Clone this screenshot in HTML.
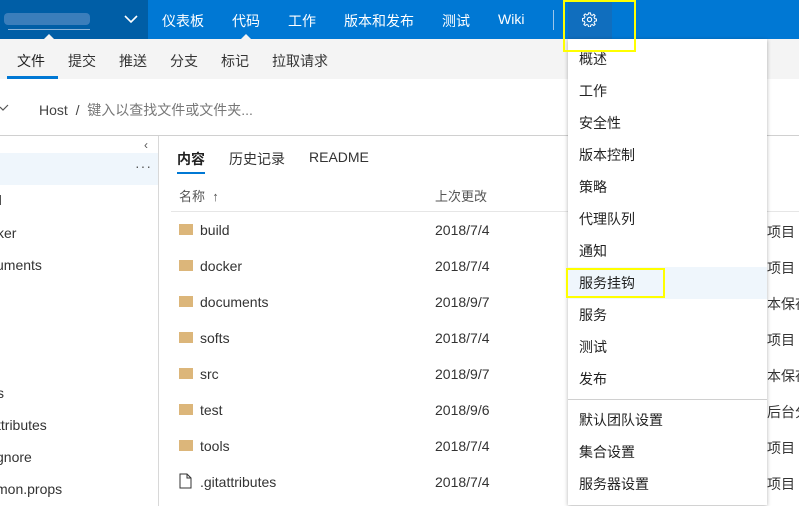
<!DOCTYPE html><html><head><meta charset="utf-8"><style>
body{margin:0;width:799px;height:506px;overflow:hidden;font-family:"Liberation Sans","Noto Sans CJK SC",sans-serif;background:#fff;position:relative;color:#333}
.a{position:absolute;white-space:nowrap}
.t{font-size:14px}
.top{left:0;top:0;width:799px;height:39px;background:#0078d4}
.nav{color:#fff;font-size:14px;top:11px}
.sub{left:0;top:39px;width:799px;height:40px;background:#f4f4f4}
.sb{top:51px;font-size:14px;color:#333}
.fold{width:14px;height:11px;background:#dcb67a}
.mi{left:579px;font-size:14px;color:#222}
</style></head><body>
<div class="a top"></div>
<div class="a" style="left:0;top:0;width:148px;height:39px;background:#005ea6"></div>
<div class="a" style="left:4px;top:13px;width:86px;height:12px;background:#4a86c0;border-radius:4px;opacity:.8"></div>
<div class="a" style="left:8px;top:29px;width:82px;height:1px;background:#8ab4da"></div>
<svg class="a" style="left:124px;top:15px" width="14" height="9"><path d="M1 1l6 6 6-6" stroke="#fff" stroke-width="1.6" fill="none"/></svg>
<div class="a" style="left:44px;top:34px;width:0;height:0;border:5px solid transparent;border-bottom-color:#f4f4f4;border-top:0"></div>
<div class="a" style="left:241px;top:34px;width:0;height:0;border:5px solid transparent;border-bottom-color:#f4f4f4;border-top:0"></div>
<div class="a nav" style="left:162px">仪表板</div>
<div class="a nav" style="left:232px">代码</div>
<div class="a nav" style="left:288px">工作</div>
<div class="a nav" style="left:344px">版本和发布</div>
<div class="a nav" style="left:442px">测试</div>
<div class="a nav" style="left:498px">Wiki</div>
<div class="a" style="left:553px;top:10px;width:1px;height:20px;background:#9cc6ea"></div>
<div class="a" style="left:568px;top:0;width:44px;height:39px;background:#106ebe"></div>
<svg class="a" style="left:582px;top:12px" width="15" height="15" viewBox="0 0 16 16"><circle cx="8" cy="8" r="2.3" fill="none" stroke="#fff" stroke-width="1.2"/><path d="M7 1h2l.4 2 1.5.7 1.7-1.2 1.4 1.4-1.2 1.7.7 1.5 2 .4v2l-2 .4-.7 1.5 1.2 1.7-1.4 1.4-1.7-1.2-1.5.7-.4 2H7l-.4-2-1.5-.7-1.7 1.2-1.4-1.4 1.2-1.7-.7-1.5-2-.4V7l2-.4.7-1.5-1.200-1.7 1.4-1.4 1.7 1.2 1.5-.7z" fill="none" stroke="#fff" stroke-width="1.1"/></svg>
<div class="a sub"></div>
<div class="a sb" style="left:17px;color:#222">文件</div>
<div class="a" style="left:7px;top:76px;width:51px;height:3px;background:#0078d4"></div>
<div class="a sb" style="left:68px">提交</div>
<div class="a sb" style="left:119px">推送</div>
<div class="a sb" style="left:170px">分支</div>
<div class="a sb" style="left:221px">标记</div>
<div class="a sb" style="left:272px">拉取请求</div>
<svg class="a" style="left:0;top:104px" width="10" height="8"><path d="M0 3l3 3 5-5" stroke="#555" stroke-width="1.2" fill="none"/></svg>
<div class="a t" style="left:39px;top:100px;color:#444">Host&nbsp; /&nbsp; <span style="color:#777">键入以查找文件或文件夹...</span></div>
<div class="a" style="left:0;top:135px;width:799px;height:1px;background:#d0d0d0"></div>
<div class="a" style="left:158px;top:136px;width:1px;height:370px;background:#d8d8d8"></div>
<div class="a" style="left:144px;top:138px;font-size:12px;color:#555">‹</div>
<div class="a" style="left:0;top:153px;width:158px;height:32px;background:#eff6fc"></div>
<div class="a" style="left:135px;top:158px;font-size:14px;color:#555;letter-spacing:1px">···</div>
<div class="a t" style="left:-6px;top:192px">d</div>
<div class="a t" style="left:-3px;top:225px">ker</div>
<div class="a t" style="left:-4px;top:257px">uments</div>
<div class="a t" style="left:-3px;top:289px;color:#0078d4">:</div>
<div class="a t" style="left:-3px;top:385px">s</div>
<div class="a t" style="left:-3px;top:417px">ttributes</div>
<div class="a t" style="left:-4px;top:449px">gnore</div>
<div class="a t" style="left:-4px;top:481px">mon.props</div>
<div class="a t" style="left:177px;top:149px;color:#222;font-weight:bold">内容</div>
<div class="a" style="left:177px;top:172px;width:28px;height:2px;background:#0078d4"></div>
<div class="a t" style="left:229px;top:149px">历史记录</div>
<div class="a t" style="left:309px;top:149px">README</div>
<div class="a" style="left:179px;top:186px;font-size:13px;color:#555">名称 &nbsp;↑</div>
<div class="a" style="left:435px;top:186px;font-size:13px;color:#555">上次更改</div>
<div class="a" style="left:171px;top:211px;width:628px;height:1px;background:#e6e6e6"></div>
<div class="a fold" style="left:179px;top:224px"></div><div class="a t" style="left:200px;top:222px">build</div><div class="a t" style="left:435px;top:222px">2018/7/4</div><div class="a t" style="left:767px;top:222px">项目</div>
<div class="a fold" style="left:179px;top:260px"></div><div class="a t" style="left:200px;top:258px">docker</div><div class="a t" style="left:435px;top:258px">2018/7/4</div><div class="a t" style="left:767px;top:258px">项目</div>
<div class="a fold" style="left:179px;top:296px"></div><div class="a t" style="left:200px;top:294px">documents</div><div class="a t" style="left:435px;top:294px">2018/9/7</div><div class="a t" style="left:767px;top:294px">本保存</div>
<div class="a fold" style="left:179px;top:332px"></div><div class="a t" style="left:200px;top:330px">softs</div><div class="a t" style="left:435px;top:330px">2018/7/4</div><div class="a t" style="left:767px;top:330px">项目</div>
<div class="a fold" style="left:179px;top:368px"></div><div class="a t" style="left:200px;top:366px">src</div><div class="a t" style="left:435px;top:366px">2018/9/7</div><div class="a t" style="left:767px;top:366px">本保存</div>
<div class="a fold" style="left:179px;top:404px"></div><div class="a t" style="left:200px;top:402px">test</div><div class="a t" style="left:435px;top:402px">2018/9/6</div><div class="a t" style="left:767px;top:402px">后台分</div>
<div class="a fold" style="left:179px;top:440px"></div><div class="a t" style="left:200px;top:438px">tools</div><div class="a t" style="left:435px;top:438px">2018/7/4</div><div class="a t" style="left:767px;top:438px">项目</div>
<svg class="a" style="left:179px;top:473px" width="13" height="16"><path d="M1 1h7l4 4v10H1z M8 1v4h4" fill="none" stroke="#333" stroke-width="1"/></svg><div class="a t" style="left:200px;top:474px">.gitattributes</div><div class="a t" style="left:435px;top:474px">2018/7/4</div><div class="a t" style="left:767px;top:474px">项目</div>
<div class="a" style="left:568px;top:39px;width:199px;height:466px;background:#fff;box-shadow:0 1px 4px rgba(0,0,0,.3)"></div>
<div class="a" style="left:568px;top:267px;width:199px;height:32px;background:#eff6fc"></div>
<div class="a" style="left:568px;top:399px;width:199px;height:1px;background:#d0d0d0"></div>
<div class="a mi" style="top:49px">概述</div>
<div class="a mi" style="top:81px">工作</div>
<div class="a mi" style="top:113px">安全性</div>
<div class="a mi" style="top:145px">版本控制</div>
<div class="a mi" style="top:177px">策略</div>
<div class="a mi" style="top:209px">代理队列</div>
<div class="a mi" style="top:241px">通知</div>
<div class="a mi" style="top:273px">服务挂钩</div>
<div class="a mi" style="top:305px">服务</div>
<div class="a mi" style="top:337px">测试</div>
<div class="a mi" style="top:369px">发布</div>
<div class="a mi" style="top:410px">默认团队设置</div>
<div class="a mi" style="top:442px">集合设置</div>
<div class="a mi" style="top:474px">服务器设置</div>
<div class="a" style="left:563px;top:0;width:69px;height:48px;border:2px solid #ffff00"></div>
<div class="a" style="left:566px;top:268px;width:95px;height:26px;border:2px solid #ffff00"></div>
</body></html>
